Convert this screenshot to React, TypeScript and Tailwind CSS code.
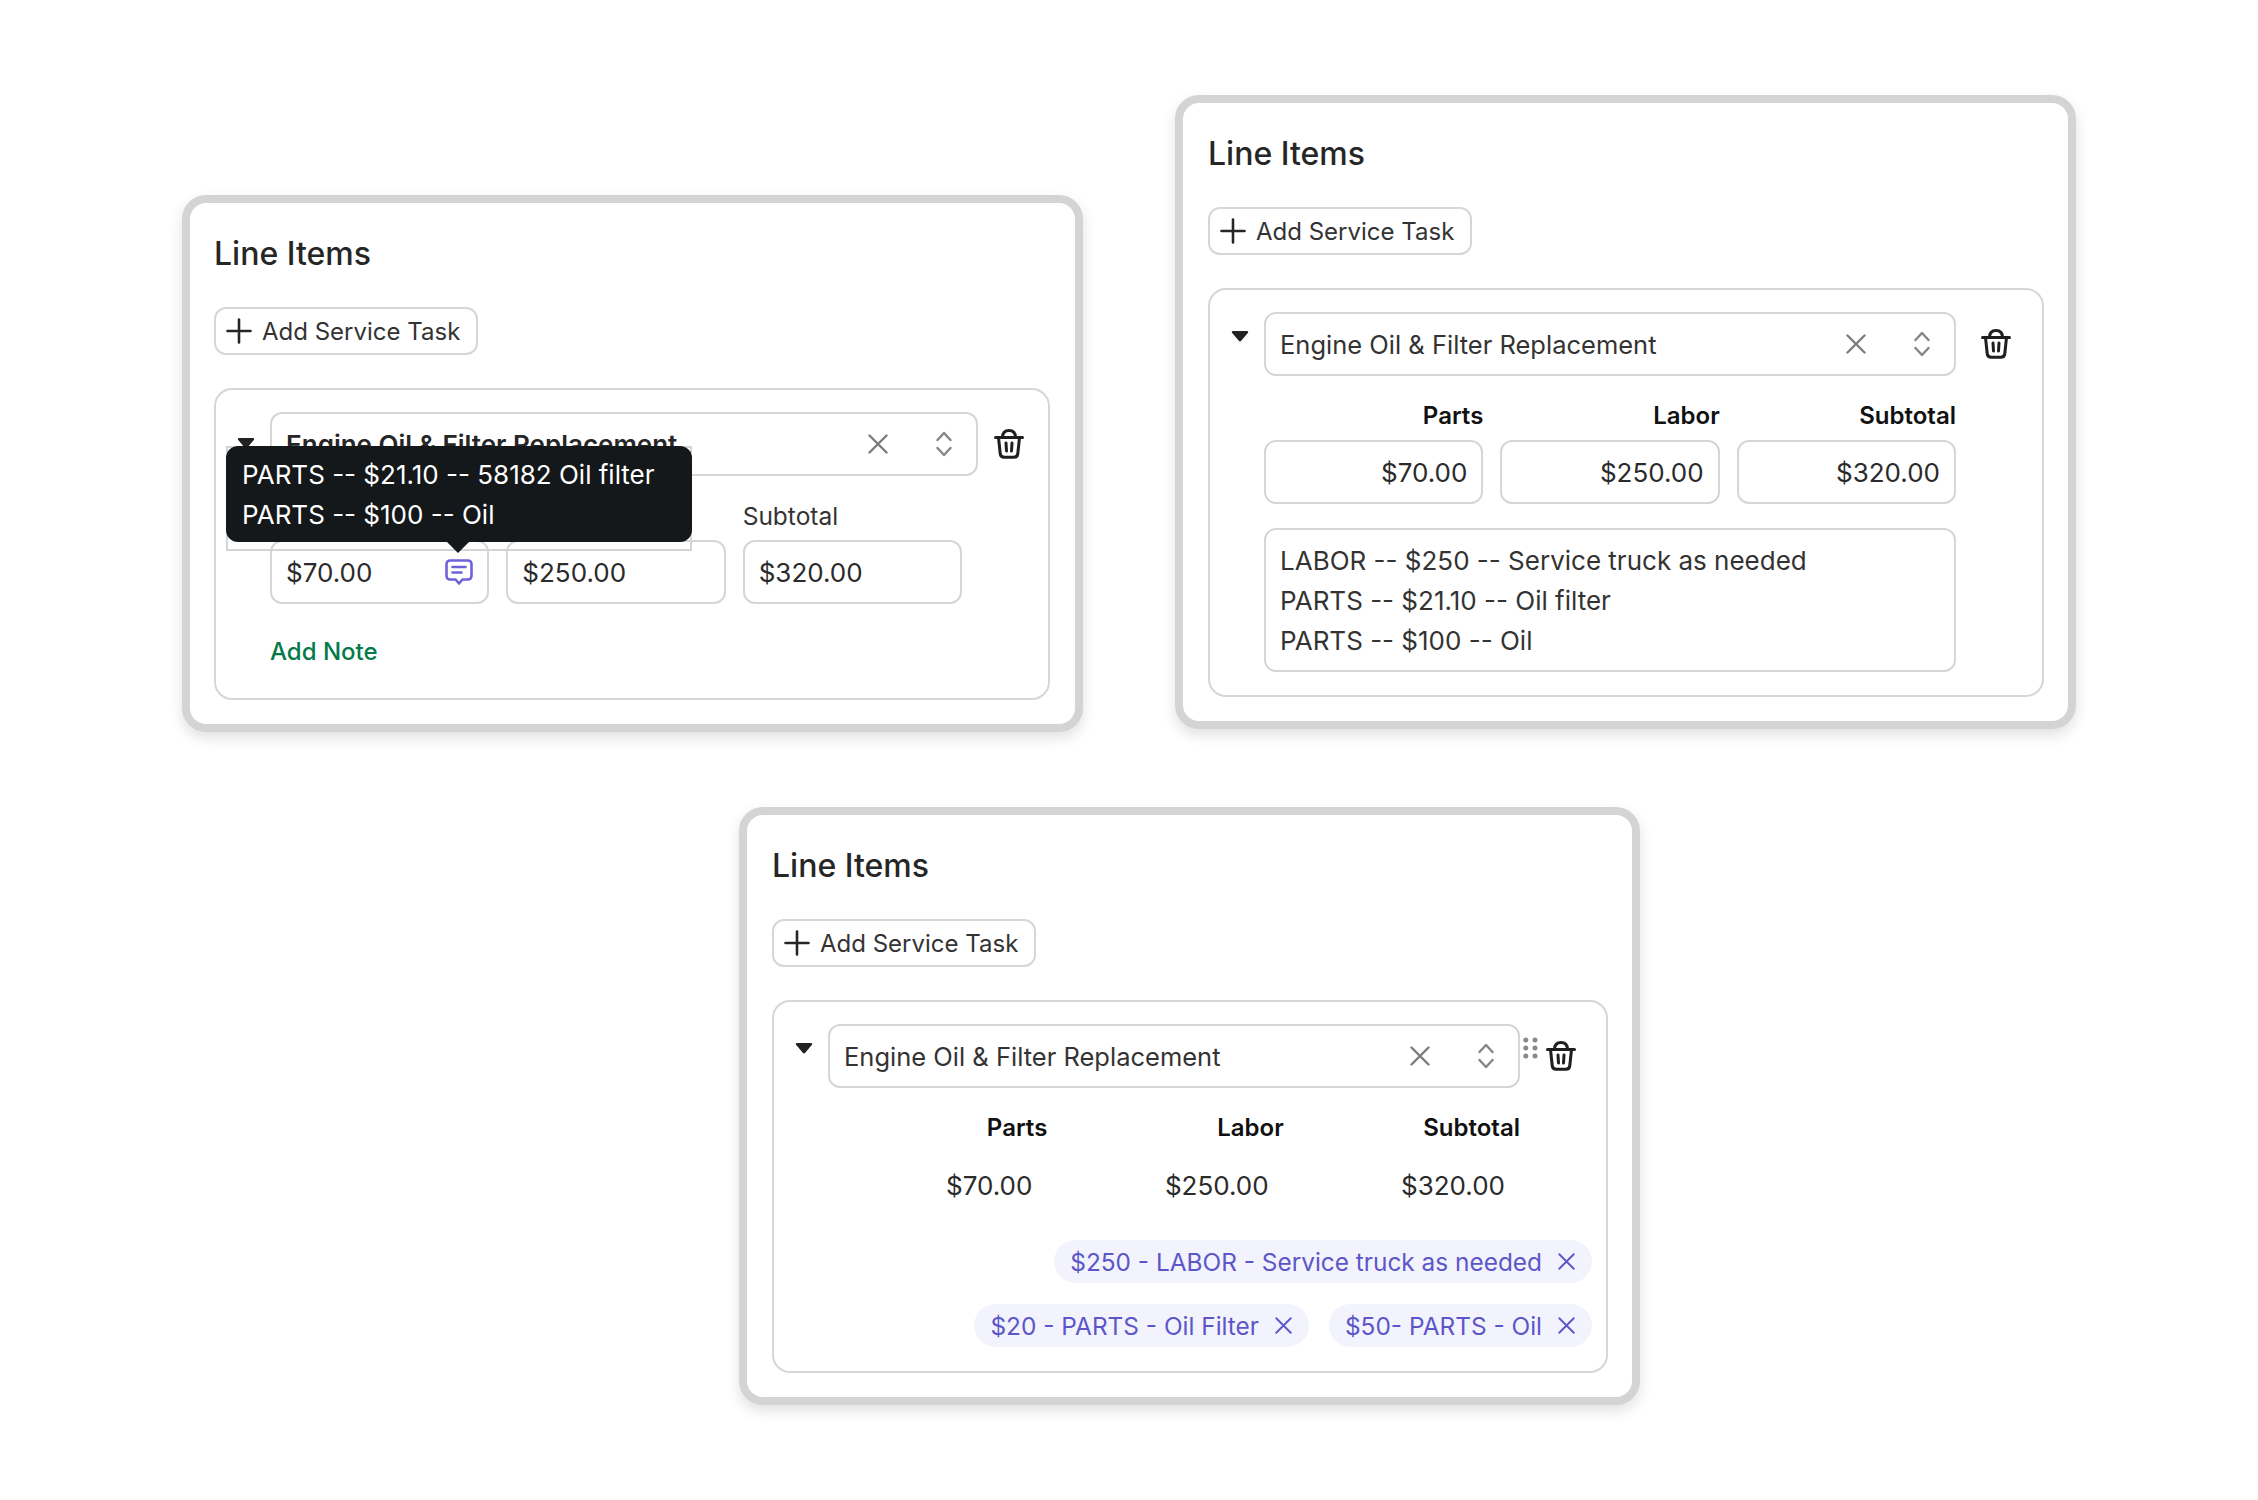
import React from "react";

const Plus = () => (
  <svg width="26" height="26" viewBox="0 0 26 26" fill="none" stroke="#262626" strokeWidth="2.6" strokeLinecap="round" className="shrink-0">
    <path d="M13 1.5v23M1.5 13h23" />
  </svg>
);

const Cross = ({ size = 20, color = "#7c7c7c", sw = 2.4 }: { size?: number; color?: string; sw?: number }) => (
  <svg width={size} height={size} viewBox="0 0 20 20" fill="none" stroke={color} strokeWidth={sw} strokeLinecap="round" className="shrink-0">
    <path d="M1.5 1.5l17 17M18.500 1.500l-17 17" />
  </svg>
);

const UpDown = () => (
  <svg width="16" height="26" viewBox="0 0 16 26" fill="none" stroke="#858585" strokeWidth="2.4" strokeLinecap="round" strokeLinejoin="round" className="shrink-0">
    <path d="M1.500 9L8 2l6.500 7M1.500 17L8 24l6.500-7" />
  </svg>
);

const Trash = () => (
  <svg width="30" height="30" viewBox="0 0 30 30" fill="none" stroke="#1f1f1f" strokeWidth="3" strokeLinecap="round" strokeLinejoin="round" className="shrink-0">
    <path d="M1.500 8.500h27" />
    <path d="M8.500 8.500C8.500 4 11 1.500 15 1.500s6.500 2.500 6.500 7" />
    <path d="M4.500 8.500l1.700 16c.2 2.300 1.600 3.800 4 3.800h9.600c2.400 0 3.800-1.500 4-3.800l1.700-16" />
    <path d="M12 14l.5 8M18 14l-.5 8" />
  </svg>
);

const Caret = () => (
  <svg width="18" height="12" viewBox="0 0 18 12" className="shrink-0">
    <path d="M2 1h14c1 0 1.500.9 1 1.700l-7 8.300c-.5.600-1.500.600-2 0L1 2.700C.5 1.900 1 1 2 1z" fill="#222222" />
  </svg>
);

const Chat = () => (
  <svg width="28" height="26" viewBox="0 0 28 26" fill="none" stroke="#6e62d8" strokeWidth="2.6" strokeLinecap="round" strokeLinejoin="round" className="shrink-0">
    <path d="M5 1.500h18c2 0 3.500 1.500 3.500 3.500v12c0 2-1.500 3.500-3.500 3.500h-5.500L14 24.500l-3.500-4H5c-2 0-3.500-1.500-3.500-3.500V5C1.500 3 3 1.500 5 1.500z" />
    <path d="M7.500 8h13M7.500 13.500h9" />
  </svg>
);

const Dots = () => (
  <svg width="15" height="22" viewBox="0 0 15 22" fill="#8a8a8a" className="shrink-0">
    <circle cx="2.800" cy="3" r="2.500" />
    <circle cx="12" cy="3" r="2.500" />
    <circle cx="2.800" cy="11" r="2.500" />
    <circle cx="12" cy="11" r="2.500" />
    <circle cx="2.800" cy="19" r="2.500" />
    <circle cx="12" cy="19" r="2.500" />
  </svg>
);

const Select = ({ wide = false }: { wide?: boolean }) => (
  <div className={`flex h-16 items-center rounded-xl border-2 border-[#d6d6d6] bg-white pl-[14px] pr-6 ${wide ? "w-[708px]" : "w-[692px]"}`}>
    <span className={`pt-[2px] ${wide ? "text-[26px] font-semibold text-[#262626]" : "text-[25.5px] text-[#333333]"}`}>Engine Oil &amp; Filter Replacement</span>
    <span className="ml-auto mr-[48px]">
      <Cross />
    </span>
    <UpDown />
  </div>
);

const Field = ({ value, right = false, children }: { value: string; right?: boolean; children?: React.ReactNode }) => (
  <div className={`flex h-[64px] items-center rounded-xl border-2 border-[#d6d6d6] bg-white px-[14px] ${right ? "justify-end" : "justify-between"}`}>
    <span className="pt-[2px] text-[26px] text-[#2b2b2b]">{value}</span>
    {children}
  </div>
);

const Chip = ({ text }: { text: string }) => (
  <div className="flex h-[43px] items-center gap-[16px] rounded-full bg-[#f3f3fd] pl-[16px] pr-[17px] text-[24.4px] text-[#5c56c9]">
    <span>{text}</span>
    <Cross size={17} color="#5c56c9" sw={2.2} />
  </div>
);

const Card = ({ className, children }: { className: string; children: React.ReactNode }) => (
  <div className={`w-[901px] shrink-0 self-start rounded-[24px] border-8 border-[#d4d4d4] bg-white px-6 pb-6 shadow-[0_6px_14px_rgba(0,0,0,0.12)] ${className}`}>
    <h2 className="pt-[26px] text-[32px] font-medium leading-[50px] text-[#262626]">Line Items</h2>
    <button className="mt-[28px] flex h-12 w-[264px] items-center gap-[10px] rounded-xl border-2 border-[#d6d6d6] bg-white pl-[10px] text-[#333333]">
      <Plus />
      <span className="pt-[2px]">Add Service Task</span>
    </button>
    {children}
  </div>
);

const Box = ({ className = "", caretClass = "mt-[18px]", children }: { className?: string; caretClass?: string; children: React.ReactNode }) => (
  <div className={`relative mt-[33px] flex w-[836px] items-start rounded-[18px] border-2 border-[#d6d6d6] pl-[21px] pt-[22px] ${className}`}>
    <div className={`w-[33px] shrink-0 ${caretClass}`}>
      <Caret />
    </div>
    <div>{children}</div>
  </div>
);

export default function App() {
  return (
    <div className="h-[1500px] w-[2258px] overflow-hidden bg-white pt-[95px] text-[24px] leading-[40px] [font-family:Inter,'Noto_Sans',sans-serif]">
      <div className="flex gap-[92px] pl-[182px]">
        <Card className="mt-[100px]">
          <Box className="h-[312px] pb-6" caretClass="mt-[25px]">
            <div className="flex items-center">
              <Select wide />
              <span className="ml-[16px]">
                <Trash />
              </span>
            </div>
            <div className="mt-[20px] grid w-[692px] grid-cols-3 gap-x-[17px] gap-y-[4px]">
              <span className="text-[24.5px] text-[#333333]">Parts</span>
              <span className="text-[24.5px] text-[#333333]">Labor</span>
              <span className="text-[24.5px] text-[#333333]">Subtotal</span>
              <Field value="$70.00">
                <Chat />
              </Field>
              <Field value="$250.00" />
              <Field value="$320.00" />
            </div>
            <p className="mt-[28px] font-medium text-[#047a4b]">Add Note</p>
            <div className="absolute left-[10px] top-[56px] z-10 h-[105px] w-[466px] border-2 border-[#d4d4d4]">
              <div className="relative -m-[2px] h-[96px] w-[466px] rounded-xl bg-[#14181a] pb-2 pl-4 pt-[9px] text-[26px] text-white">
                <p>PARTS -- $21.10 -- 58182 Oil filter</p>
                <p>PARTS -- $100 -- Oil</p>
                <span className="absolute left-[221px] top-[96px] h-0 w-0 border-x-[11px] border-t-[11px] border-x-transparent border-t-[#14181a]" />
              </div>
            </div>
          </Box>
        </Card>
        <Card className="pl-[25px]">
          <Box className="pb-[23px]">
            <div className="flex items-center">
              <Select />
              <span className="ml-[25px]">
                <Trash />
              </span>
            </div>
            <div className="mt-[20px] grid w-[692px] grid-cols-3 gap-x-[17px] gap-y-[4px]">
              <span className="text-right font-semibold text-[#111111]">Parts</span>
              <span className="text-right font-semibold text-[#111111]">Labor</span>
              <span className="text-right font-semibold text-[#111111]">Subtotal</span>
              <Field value="$70.00" right />
              <Field value="$250.00" right />
              <Field value="$320.00" right />
            </div>
            <div className="mt-6 h-[144px] w-[692px] rounded-xl border-2 border-[#d6d6d6] px-[14px] pb-[10px] pt-[11px] text-[26px] text-[#333333]">
              <p>LABOR -- $250 -- Service truck as needed</p>
              <p>PARTS -- $21.10 -- Oil filter</p>
              <p>PARTS -- $100 -- Oil</p>
            </div>
          </Box>
        </Card>
      </div>
      <Card className="ml-[739px] mt-[75px] pl-[25px]">
        <Box className="pb-6">
          <div className="relative flex items-center">
            <Select />
            <span className="absolute left-[695px] top-[13px]">
              <Dots />
            </span>
            <span className="ml-[26px]">
              <Trash />
            </span>
          </div>
          <div className="mt-[20px] grid w-[692px] grid-cols-3 gap-x-[17px] gap-y-[18px]">
            <span className="text-right font-semibold text-[#111111]">Parts</span>
            <span className="text-right font-semibold text-[#111111]">Labor</span>
            <span className="text-right font-semibold text-[#111111]">Subtotal</span>
            <span className="pr-[15px] text-right text-[26px] text-[#2b2b2b]">$70.00</span>
            <span className="pr-[15px] text-right text-[26px] text-[#2b2b2b]">$250.00</span>
            <span className="pr-[15px] text-right text-[26px] text-[#2b2b2b]">$320.00</span>
          </div>
          <div className="-mr-[16px] mt-[34px] flex flex-col items-end gap-[21px]">
            <Chip text="$250 - LABOR - Service truck as needed" />
            <div className="flex gap-[20px]">
              <Chip text="$20 - PARTS - Oil Filter" />
              <Chip text="$50- PARTS - Oil" />
            </div>
          </div>
        </Box>
      </Card>
    </div>
  );
}
